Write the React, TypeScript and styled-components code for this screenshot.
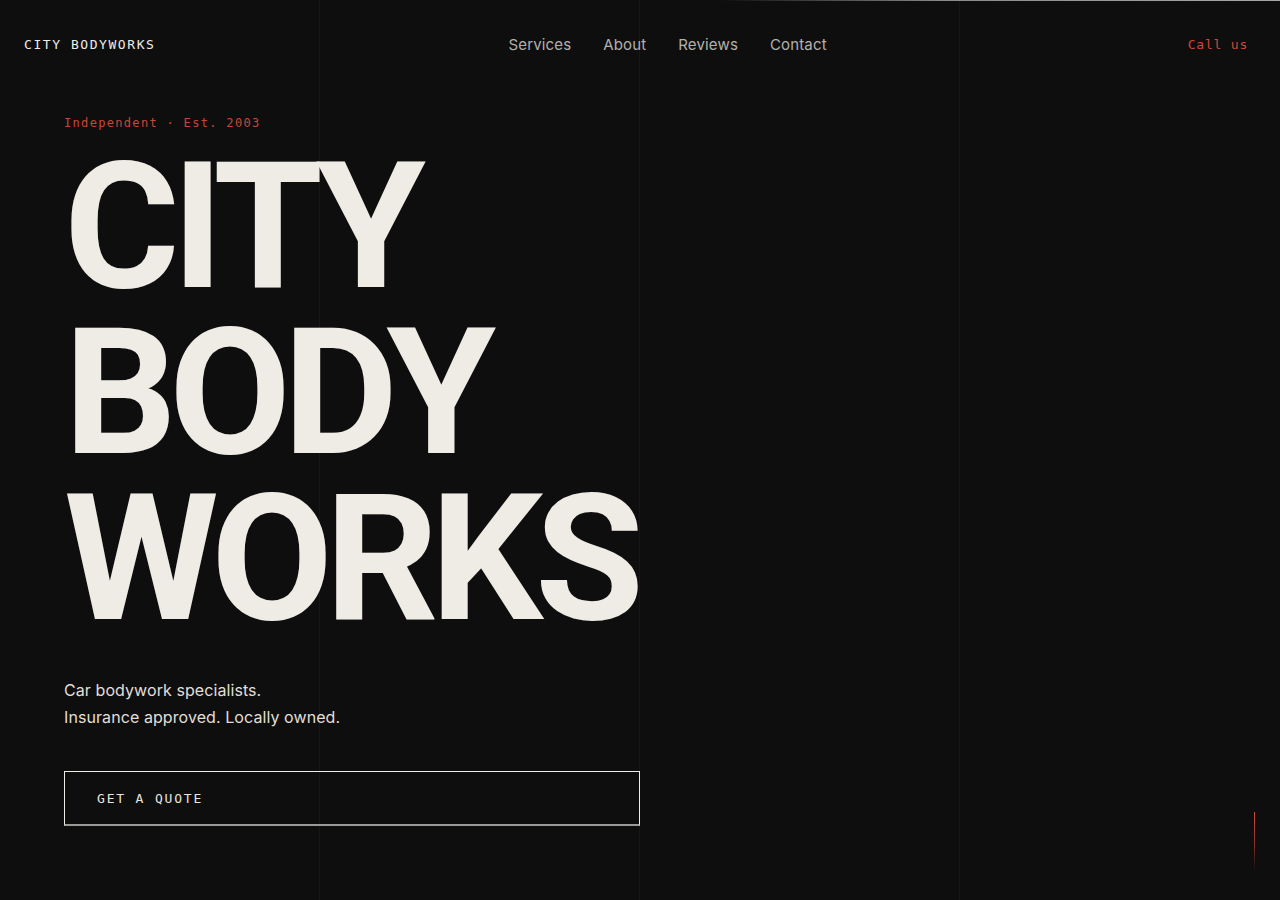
import React from "react";
import styled, { createGlobalStyle } from "styled-components";

const GlobalStyle = createGlobalStyle`
  html, body { margin: 0; padding: 0; }
  body {
    background-color: #0e0e0f;
    background-image:
      linear-gradient(to right, transparent 319px, #161617 319px, #161617 320px, transparent 320px),
      linear-gradient(to right, transparent 639px, #161617 639px, #161617 640px, transparent 640px),
      linear-gradient(to right, transparent 959px, #161617 959px, #161617 960px, transparent 960px);
    min-height: 900px;
    color: #efece6;
    font-family: "Inter", "Noto Sans", sans-serif;
    overflow: hidden;
  }
`;

const Page = styled.div`
  position: relative;
  min-height: 900px;
`;

const TopSweep = styled.div`
  position: absolute;
  top: 0;
  left: 720px;
  right: 0;
  height: 1px;
  background: linear-gradient(to right, rgba(160,160,160,0) 0%, rgba(170,170,170,0.8) 40%, #a8a8a8 100%);
`;

const Header = styled.header`
  height: 88px;
  display: flex;
  align-items: center;
  justify-content: space-between;
  padding: 0 32px 0 24px;
`;

const Logo = styled.div`
  font-family: "DejaVu Sans Mono", "Liberation Mono", monospace;
  font-size: 13px;
  letter-spacing: 0.12em;
  color: #efece6;
`;

const Nav = styled.nav`
  display: flex;
  gap: 32px;
  margin-right: 8px;
`;

const NavLink = styled.a`
  font-family: "Inter", sans-serif;
  font-size: 15px;
  letter-spacing: 0.01em;
  color: #b3b1ac;
  text-decoration: none;
`;

const CallLink = styled.a`
  font-family: "DejaVu Sans Mono", "Liberation Mono", monospace;
  font-size: 13px;
  letter-spacing: 0.06em;
  color: #d0473a;
  text-decoration: none;
`;

const Hero = styled.main`
  padding: 27px 0 0 64px;
  display: flex;
  flex-direction: column;
  align-items: flex-start;
`;

const Eyebrow = styled.div`
  font-family: "DejaVu Sans Mono", "Liberation Mono", monospace;
  font-size: 12px;
  line-height: 16px;
  letter-spacing: 0.11em;
  color: #c7473a;
`;

const Title = styled.h1`
  margin: 13px 0 0;
  font-family: "Roboto", sans-serif;
  font-weight: 700;
  font-size: 177px;
  line-height: 166px;
  letter-spacing: -0.045em;
  color: #efece6;
`;

const TitleLine = styled.span`
  display: block;
`;

const Lede = styled.p`
  margin: 35px 0 0;
  font-family: "Inter", sans-serif;
  font-size: 16px;
  line-height: 27px;
  letter-spacing: 0.005em;
  color: #e2dfd9;
`;

const QuoteButton = styled.button`
  margin-top: 40px;
  width: 576px;
  height: 55px;
  box-sizing: border-box;
  background: transparent;
  border: 1px solid #f0ede8;
  border-bottom: 2px solid #9c9a95;
  padding: 0 0 0 32px;
  text-align: left;
  font-family: "DejaVu Sans Mono", "Liberation Mono", monospace;
  font-size: 13px;
  letter-spacing: 0.14em;
  color: #e8e5df;
  cursor: pointer;
`;

const ScrollMark = styled.div`
  position: absolute;
  left: 1254px;
  top: 812px;
  width: 1px;
  height: 58px;
  background: linear-gradient(to bottom, #d0473a 0%, rgba(208,71,58,0.6) 60%, rgba(208,71,58,0) 100%);
`;

export default function App() {
  return (
    <Page>
      <GlobalStyle />
      <TopSweep />
      <Header>
        <Logo>CITY BODYWORKS</Logo>
        <Nav>
          <NavLink href="#services">Services</NavLink>
          <NavLink href="#about">About</NavLink>
          <NavLink href="#reviews">Reviews</NavLink>
          <NavLink href="#contact">Contact</NavLink>
        </Nav>
        <CallLink href="#call">Call us</CallLink>
      </Header>
      <Hero>
        <Eyebrow>Independent · Est. 2003</Eyebrow>
        <Title>
          <TitleLine>CITY</TitleLine>
          <TitleLine>BODY</TitleLine>
          <TitleLine>WORKS</TitleLine>
        </Title>
        <Lede>
          Car bodywork specialists.
          <br />
          Insurance approved. Locally owned.
        </Lede>
        <QuoteButton>GET A QUOTE</QuoteButton>
      </Hero>
      <ScrollMark />
    </Page>
  );
}
